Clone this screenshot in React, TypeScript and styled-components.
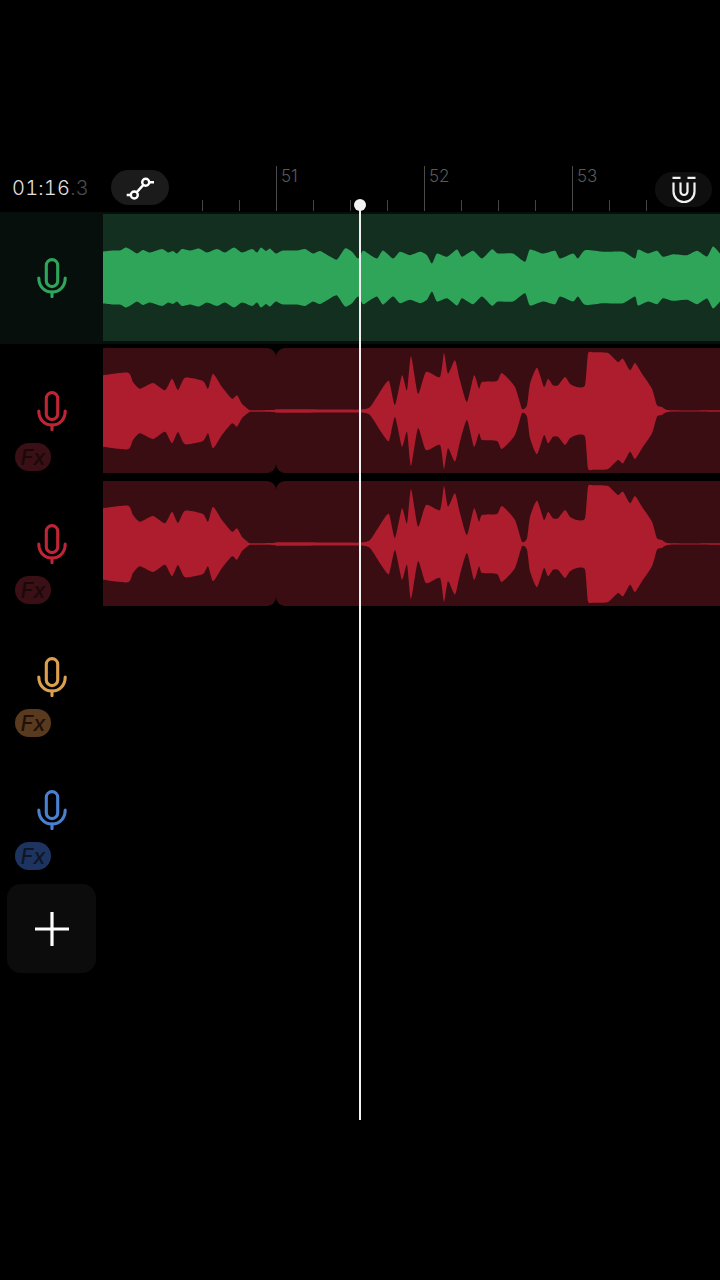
import React from 'react'
import styled, { createGlobalStyle } from 'styled-components'

const GlobalStyle = createGlobalStyle`
  html, body {
    margin: 0;
    background: #000;
  }
`

type Point = [number, number]

// x in page pixels, amplitude in pixels from the centre line
const VOICE_WAVE: Point[] = [
  [103, 26], [113, 27], [120, 27], [126, 30], [132, 27], [137, 24], [143, 27.5], [150, 25], [162, 28.5],
  [168, 25], [173, 26.5], [177, 24], [182, 28.5], [190, 27], [199, 29], [207, 25], [217, 28.5], [225, 25],
  [234, 30], [242, 25], [252, 28.5], [257, 25], [261, 30], [266, 26.5], [270, 29], [276, 24], [283, 27],
  [297, 27], [305, 28.5], [313, 24], [320, 26.5], [330, 21], [337, 18], [345, 29], [352, 25.7], [358, 19],
  [363, 26.7], [368, 24], [377, 19], [383, 27], [393, 19], [400, 25.7], [410, 22.3], [420, 25.7], [427, 22.3],
  [432, 14], [437, 24], [447, 20.7], [457, 28], [462, 20.7], [473, 26.7], [482, 19], [492, 28.3], [498, 24],
  [513, 24], [525, 15.7], [530, 28], [543, 24], [555, 26.7], [560, 19], [573, 24], [578, 19], [585, 27.3],
  [603, 25.7], [623, 25.7], [635, 19], [638, 28], [648, 24], [657, 26.7], [663, 20.7], [673, 23.3], [687, 22.3],
  [697, 26.7], [707, 21], [713, 31], [720, 24],
]

const TAKE_WAVE: Point[] = [
  [103, 35.7], [128, 38.3], [133, 29], [140, 22.3], [153, 28], [165, 20.7], [172, 32.3], [178, 21], [185, 33.3],
  [203, 30], [208, 22.3], [213, 37.3], [222, 24], [232, 12.3], [237, 15.7], [242, 7.3], [249, 1.3], [253, 0.8],
  [276, 1], [277, 1.7], [340, 1.5], [360, 1.5], [370, 4], [382, 22.3], [389, 30], [395, 6], [402, 35.7], [407, 20.7],
  [411, 55], [418, 17.3], [426, 39], [440, 34], [444, 58], [448, 37.3], [455, 50.7], [460, 30.7], [467, 9],
  [474, 35.7], [479, 22.3], [482, 29], [497, 30], [502, 38], [515, 24], [522, 2.3], [527, 5.7], [530, 27.3],
  [537, 43.3], [544, 24], [548, 32.3], [553, 25.7], [558, 25.7], [565, 34], [570, 27.3], [577, 24], [585, 25.7],
  [588, 57.3], [593, 58.7], [608, 58], [618, 49], [623, 52.3], [630, 40.7], [635, 48], [642, 37.3], [652, 22.3],
  [657, 5.7], [662, 4], [670, 0.7], [720, 0.8],
]

const LANE_X = 103
const LANE_W = 617

// runs a soft curve through the points so the peaks stay but the edges aren't straight lines
function curve(points: number[][]) {
  let d = ''
  for (let i = 0; i < points.length - 1; i++) {
    const p0 = points[Math.max(i - 1, 0)]
    const p1 = points[i]
    const p2 = points[i + 1]
    const p3 = points[Math.min(i + 2, points.length - 1)]
    const c1x = p1[0] + (p2[0] - p0[0]) / 10
    const c1y = p1[1] + (p2[1] - p0[1]) / 10
    const c2x = p2[0] - (p3[0] - p1[0]) / 10
    const c2y = p2[1] - (p3[1] - p1[1]) / 10
    d += `C${c1x.toFixed(1)} ${c1y.toFixed(1)} ${c2x.toFixed(1)} ${c2y.toFixed(1)} ${p2[0].toFixed(1)} ${p2[1].toFixed(1)}`
  }
  return d
}

function wavePath(points: Point[], centre: number) {
  const top = points.map(([x, a]) => [x - LANE_X, centre - a])
  const bottom = [...points].reverse().map(([x, a]) => [x - LANE_X, centre + a])
  return `M${top[0][0]} ${top[0][1]}${curve(top)}L${bottom[0][0]} ${bottom[0][1]}${curve(bottom)}Z`
}

const Page = styled.div`
  position: relative;
  width: 720px;
  height: 1280px;
  padding-top: 166px;
  box-sizing: border-box;
  overflow: hidden;
  background: #000;
  font-family: Inter, "Liberation Sans", sans-serif;
`

const Header = styled.header`
  position: relative;
  display: flex;
  align-items: flex-start;
  height: 46px;
  padding-left: 12px;
`

const Time = styled.div`
  width: 99px;
  margin-top: 10px;
  font-size: 20px;
  line-height: 24px;
  font-weight: 300;
  font-variant-numeric: tabular-nums;
  letter-spacing: 0.2px;
  color: #e2e2e2;
  white-space: nowrap;
`

const TimeTenths = styled.span`
  color: #4c4c4c;
`

const PillButton = styled.div`
  display: flex;
  align-items: center;
  justify-content: center;
  width: 58px;
  height: 35px;
  margin-top: 4px;
  border-radius: 18px;
  background: #1b1b1b;
`

const MagnetButton = styled(PillButton)`
  position: absolute;
  top: 2px;
  right: 8px;
  width: 57px;
  margin-top: 4px;
  background: #0f0f0f;
`

const Ruler = styled.div`
  display: flex;
  align-items: flex-end;
  height: 45px;
  margin-left: 33px;
`

const Tick = styled.div<{ $major: boolean }>`
  position: relative;
  box-sizing: border-box;
  width: 37px;
  height: ${p => (p.$major ? 45 : 11)}px;
  border-left: 1px solid ${p => (p.$major ? '#4a4a4a' : '#444')};
`

const TickLabel = styled.span`
  position: absolute;
  top: 0;
  left: 4px;
  font-size: 17px;
  line-height: 20px;
  font-weight: 300;
  color: #5a5a5a;
`

const Track = styled.section<{ $active?: boolean }>`
  display: flex;
  height: ${p => (p.$active ? 132 : 133)}px;
  margin-bottom: ${p => (p.$active ? 1 : 0)}px;
  background: ${p => (p.$active ? '#060f0b' : 'transparent')};
`

const Side = styled.div`
  display: flex;
  flex-direction: column;
  flex: none;
  width: 103px;
  padding-top: 46px;
  box-sizing: border-box;
`

const MicIcon = styled.svg`
  display: block;
  flex: none;
  width: 30px;
  height: 40px;
  margin-left: 36.5px;
`

const FxBadge = styled.div<{ $bg: string; $ink: string }>`
  display: flex;
  align-items: center;
  justify-content: center;
  width: 36px;
  height: 28px;
  margin: 12px 0 0 15px;
  border-radius: 14px;
  background: ${p => p.$bg};
  color: ${p => p.$ink};
  font-size: 22px;
  line-height: 28px;
  font-style: italic;
  font-weight: 500;
`

const Lane = styled.div<{ $active?: boolean }>`
  position: relative;
  display: flex;
  flex: 1;
  height: ${p => (p.$active ? 127 : 125)}px;
  margin-top: ${p => (p.$active ? 2 : 3)}px;
`

const Clip = styled.div<{ $bg: string; $grow: number; $radius: string }>`
  flex: ${p => p.$grow} 0 0;
  border-radius: ${p => p.$radius};
  background: ${p => p.$bg};
`

const WaveSvg = styled.svg`
  position: absolute;
  top: 0;
  left: 0;
  width: 100%;
  height: 100%;
  filter: blur(0.4px);
`

const AddButton = styled.div`
  display: flex;
  align-items: center;
  justify-content: center;
  width: 89px;
  height: 89px;
  margin: 7px 0 0 7px;
  border-radius: 14px;
  background: #0c0c0c;
`

const Playhead = styled.div`
  position: absolute;
  top: 205px;
  left: 359px;
  width: 2px;
  height: 915px;
  background: #f2f2f2;

  &::before {
    content: '';
    position: absolute;
    top: -6px;
    left: -5px;
    width: 12px;
    height: 12px;
    border-radius: 50%;
    background: #f2f2f2;
  }
`

const Mic = ({ color }: { color: string }) => (
  <MicIcon viewBox="0 0 30 40" fill="none" stroke={color} strokeWidth="3.1" strokeLinecap="round">
    <rect x="9.3" y="1.6" width="11.4" height="27" rx="5.7" />
    <path d="M1.8 20C1.8 28 7 34 15 34C23 34 28.2 28 28.2 20" />
    <path d="M15 34V38.6" />
  </MicIcon>
)

const NodesIcon = () => (
  <svg width="30" height="24" viewBox="0 0 30 24" fill="none" stroke="#fff" strokeWidth="2.4">
    <circle cx="9.3" cy="19" r="3.5" />
    <circle cx="20.7" cy="6.3" r="3.5" />
    <path d="M1.7 19H5.8M11.6 16.4L18.4 8.9M24.2 6.3H29" />
  </svg>
)

const MagnetIcon = () => (
  <svg width="28" height="30" viewBox="0 0 28 30" fill="none" stroke="#f2f2f2" strokeWidth="2.2">
    <path d="M2.5 2.8H10.5M17.5 2.8H25.5" />
    <path d="M3.5 7.5V16.5A10.5 10.5 0 0 0 24.5 16.5V7.5" />
    <path d="M10.5 7.5V16.5A3.5 3.5 0 0 0 17.5 16.5V7.5" />
  </svg>
)

const PlusIcon = () => (
  <svg width="34" height="34" viewBox="0 0 34 34" fill="none" stroke="#fff" strokeWidth="3.2">
    <path d="M17 0V34M0 17H34" />
  </svg>
)

type TrackInfo = {
  mic: string
  fx?: { bg: string; ink: string }
  clips?: { bg: string; wave: string; points: Point[]; split: boolean }
}

const TRACKS: TrackInfo[] = [
  { mic: '#2fa65b', clips: { bg: '#122f20', wave: '#2fa55a', points: VOICE_WAVE, split: false } },
  {
    mic: '#bf2536',
    fx: { bg: '#3a0f15', ink: '#1a090b' },
    clips: { bg: '#3a0d13', wave: '#ad1d2e', points: TAKE_WAVE, split: true },
  },
  {
    mic: '#bf2536',
    fx: { bg: '#3a0f15', ink: '#1a090b' },
    clips: { bg: '#3a0d13', wave: '#ad1d2e', points: TAKE_WAVE, split: true },
  },
  { mic: '#dca04e', fx: { bg: '#5a3a1e', ink: '#1e1208' } },
  { mic: '#4a80cf', fx: { bg: '#1e3460', ink: '#0e1628' } },
]

const TICKS = [0, 0, 51, 0, 0, 0, 52, 0, 0, 0, 53, 0, 0]

export default function App() {
  return (
    <Page>
      <GlobalStyle />
      <Header>
        <Time>
          01:16<TimeTenths>.3</TimeTenths>
        </Time>
        <PillButton>
          <NodesIcon />
        </PillButton>
        <Ruler>
          {TICKS.map((bar, i) => (
            <Tick key={i} $major={bar > 0}>
              {bar > 0 && <TickLabel>{bar}</TickLabel>}
            </Tick>
          ))}
        </Ruler>
        <MagnetButton>
          <MagnetIcon />
        </MagnetButton>
      </Header>

      {TRACKS.map((track, i) => {
        const active = i === 0
        const height = active ? 127 : 125
        const centre = active ? 63.5 : 63
        return (
          <Track key={i} $active={active}>
            <Side>
              <Mic color={track.mic} />
              {track.fx && (
                <FxBadge $bg={track.fx.bg} $ink={track.fx.ink}>
                  Fx
                </FxBadge>
              )}
            </Side>
            {track.clips && (
              <Lane $active={active}>
                {track.clips.split ? (
                  <>
                    <Clip $bg={track.clips.bg} $grow={173} $radius="0 9px 9px 0" />
                    <Clip $bg={track.clips.bg} $grow={444} $radius="9px 0 0 9px" />
                  </>
                ) : (
                  <Clip $bg={track.clips.bg} $grow={1} $radius="0" />
                )}
                <WaveSvg viewBox={`0 0 ${LANE_W} ${height}`} preserveAspectRatio="none">
                  <path d={wavePath(track.clips.points, centre)} fill={track.clips.wave} />
                </WaveSvg>
              </Lane>
            )}
          </Track>
        )
      })}

      <AddButton>
        <PlusIcon />
      </AddButton>
      <Playhead />
    </Page>
  )
}
